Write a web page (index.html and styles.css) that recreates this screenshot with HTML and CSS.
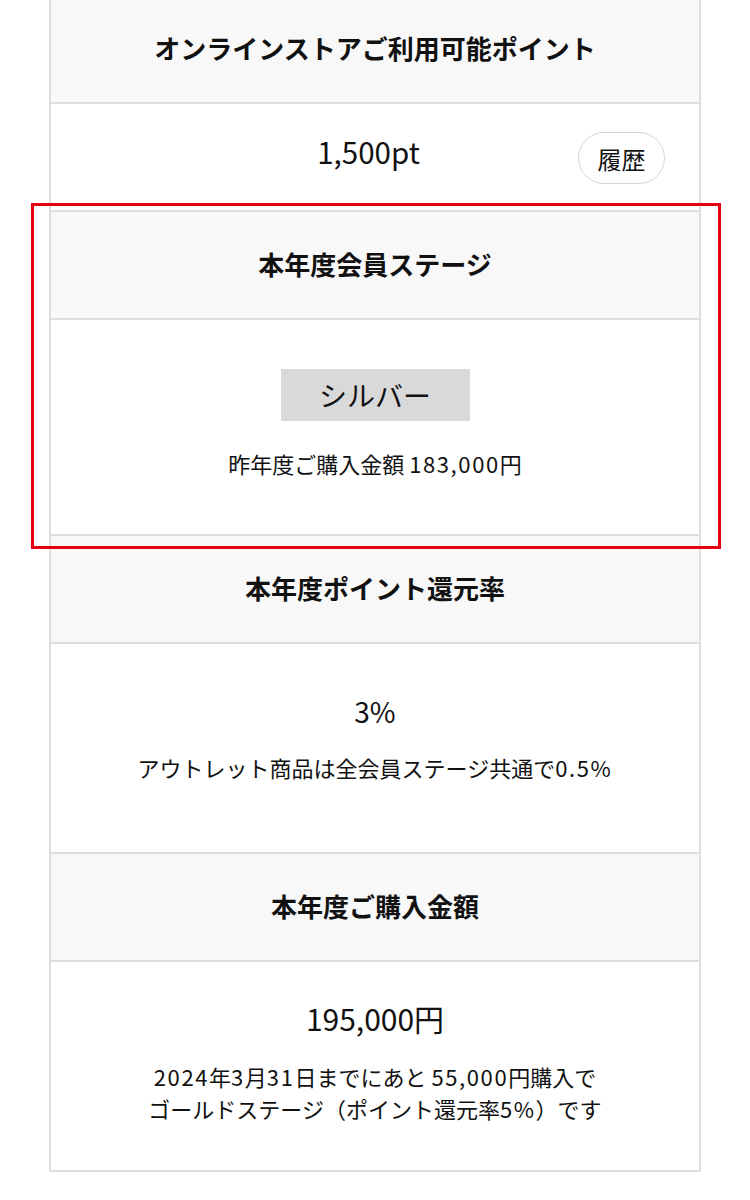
FILE: index.html
```html
<!DOCTYPE html>
<html lang="ja">
<head>
<meta charset="utf-8">
<title>会員情報</title>
<link rel="stylesheet" href="styles.css">
</head>
<body>
<div class="page">
  <div class="card">
    <div class="head">オンラインストアご利用可能ポイント</div>
    <div class="row-points">
      <span class="spacer"></span>
      <span class="points">1,500pt</span>
      <button class="history" type="button">履歴</button>
    </div>

    <div class="head">本年度会員ステージ</div>
    <div class="body body-stage">
      <div class="stage-badge">シルバー</div>
      <p class="note">昨年度ご購入金額 <span class="num">183,000</span>円</p>
    </div>

    <div class="head">本年度ポイント還元率</div>
    <div class="body body-rate">
      <p class="value">3%</p>
      <p class="note">アウトレット商品は全会員ステージ共通で<span class="num">0.5%</span></p>
    </div>

    <div class="head">本年度ご購入金額</div>
    <div class="body body-amount">
      <p class="value">195,000円</p>
      <p class="note"><span class="num">2024</span>年<span class="num">3</span>月<span class="num">31</span>日までにあと <span class="num">55,000</span>円購入で<br>ゴールドステージ（ポイント還元率<span class="num">5%</span>）です</p>
    </div>
  </div>
  <div class="highlight"></div>
</div>
</body>
</html>
```

FILE: styles.css
```css
html, body {
  margin: 0;
  padding: 0;
  background: #ffffff;
}

body {
  font-family: "Noto Sans CJK JP", "Noto Sans", sans-serif;
  color: #111111;
}

.page {
  position: relative;
  width: 750px;
  height: 1200px;
  overflow: hidden;
}

.card {
  box-sizing: border-box;
  width: 652px;
  margin: -6px auto 0;
  border: 2px solid #dedede;
}

.head {
  box-sizing: border-box;
  height: 108px;
  display: flex;
  align-items: center;
  justify-content: center;
  padding-bottom: 4px;
  background: #f8f8f8;
  border-bottom: 2px solid #dedede;
  font-size: 26px;
  font-weight: 700;
}

.row-points {
  box-sizing: border-box;
  height: 108px;
  display: grid;
  grid-template-columns: 1fr auto 1fr;
  align-items: center;
  padding: 0 34px;
  border-bottom: 2px solid #dedede;
}

.points {
  font-size: 29.5px;
  line-height: 40px;
  margin-top: -12px;
  padding-right: 13px;
}

.history {
  justify-self: end;
  width: 87px;
  height: 52px;
  border: 1px solid #d6d6d6;
  border-radius: 26px;
  background: #ffffff;
  font-family: inherit;
  font-size: 24px;
  color: #111111;
  padding: 0;
  margin-top: 2px;
}

.body {
  box-sizing: border-box;
  display: flex;
  flex-direction: column;
  align-items: center;
  border-bottom: 2px solid #dedede;
  text-align: center;
}

.body:last-child {
  border-bottom: none;
}

.body p {
  margin: 0;
}

.note {
  font-size: 22px;
  line-height: 32px;
}

.num {
  letter-spacing: 1.6px;
}

.value {
  font-size: 28px;
  line-height: 42px;
}

.body-stage {
  height: 216px;
  padding-top: 49px;
}

.stage-badge {
  width: 189px;
  height: 52px;
  background: #d9d9d9;
  font-size: 28px;
  line-height: 52px;
}

.body-stage .note {
  margin-top: 26px;
}

.body-rate {
  height: 210px;
  padding-top: 46px;
}

.body-rate .note {
  margin-top: 19px;
}

.body-amount {
  height: 208px;
  padding-top: 35px;
}

.body-amount .value {
  font-size: 30px;
}

.body-amount .note {
  margin-top: 21px;
}

.highlight {
  position: absolute;
  left: 31px;
  top: 203px;
  width: 690px;
  height: 346px;
  box-sizing: border-box;
  border: 3px solid #e50012;
  pointer-events: none;
}
```
